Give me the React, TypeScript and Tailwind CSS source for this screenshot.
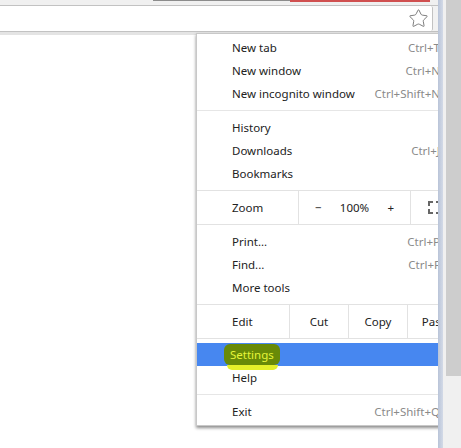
import { Star } from "lucide-react";

interface Item {
    label: string;
    shortcut?: string;
}

function MenuItem({ label, shortcut }: Item) {
    return (
        <div className="flex h-[23px] items-center justify-between pl-[35px] pr-[25px]">
            <span>{label}</span>
            {shortcut && <span className="text-[#8a8a8a]">{shortcut}</span>}
        </div>
    );
}

function Separator() {
    return <div className="my-[5px] h-px bg-[#e6e6e6]" />;
}

function FullscreenIcon() {
    return (
        <svg width="13" height="13" viewBox="0 0 13 13" fill="none" stroke="#666" strokeWidth="2">
            <path d="M1 5V1h4M8 1h4v4M12 8v4H8M5 12H1V8" />
        </svg>
    );
}

export default function App() {
    return (
        <div className="flex h-[448px] w-[461px] overflow-hidden bg-white font-['Noto_Sans',sans-serif] text-[11.5px] text-[#222]">
            <div className="relative flex flex-1 flex-col overflow-hidden">
                {/* tab strip bottom */}
                <div className="flex h-[5px] bg-[#f0f0f0]">
                    <div className="w-[153px]" />
                    <div className="w-[137px] border-t border-[#8c8c8c]" />
                    <div className="w-[140px] border-t-2 border-[#d05050]" />
                </div>

                {/* toolbar */}
                <div className="flex h-[27px] border-y border-[#c2c2c2]">
                    <div className="flex flex-1 items-center justify-end rounded-r-[2px] border-r border-[#c2c2c2] bg-white pr-[3px]">
                        <Star size={21} strokeWidth={1} color="#6b6b6b" />
                    </div>
                    <div className="w-[5px] bg-[#f2f2f2]" />
                </div>
                <div className="h-[3px] bg-[#e4e4e4]" />
                <div className="flex-1 bg-white" />

                {/* chrome menu */}
                <div className="absolute left-[196px] top-[33px] w-[270px] border border-[#c8c8c8] bg-white pb-[2px] pt-[2px] shadow-[0_2px_3px_rgba(0,0,0,0.45)]">
                    <MenuItem label="New tab" shortcut="Ctrl+T" />
                    <MenuItem label="New window" shortcut="Ctrl+N" />
                    <MenuItem label="New incognito window" shortcut="Ctrl+Shift+N" />
                    <Separator />
                    <MenuItem label="History" />
                    <MenuItem label="Downloads" shortcut="Ctrl+J" />
                    <MenuItem label="Bookmarks" />

                    <div className="mt-[5px] flex h-[35px] border-y border-[#e2e2e2]">
                        <div className="flex w-[101px] items-center pl-[35px]">Zoom</div>
                        <div className="flex w-[112px] items-center justify-between border-l border-[#e2e2e2] px-[16px]">
                            <span>−</span>
                            <span>100%</span>
                            <span>+</span>
                        </div>
                        <div className="flex flex-1 items-center border-l border-[#e2e2e2] pl-[17px]">
                            <FullscreenIcon />
                        </div>
                    </div>

                    <div className="mt-[5px]">
                        <MenuItem label="Print..." shortcut="Ctrl+P" />
                        <MenuItem label="Find..." shortcut="Ctrl+F" />
                        <MenuItem label="More tools" />
                    </div>

                    <div className="mt-[5px] flex h-[35px] border-y border-[#e2e2e2]">
                        <div className="flex w-[92px] items-center pl-[35px]">Edit</div>
                        <div className="flex w-[59px] items-center justify-center border-l border-[#e2e2e2]">Cut</div>
                        <div className="flex w-[59px] items-center justify-center border-l border-[#e2e2e2]">Copy</div>
                        <div className="flex flex-1 items-center justify-center border-l border-[#e2e2e2]">Paste</div>
                    </div>

                    <div className="mt-[4px] flex h-[23px] items-center bg-[#4787f0] pl-[27px]">
                        <span className="relative rounded-[6px] bg-[#688a08] px-[6px] py-[2px] text-[#e6f43a]">
                            Settings
                            <span className="absolute -bottom-[5px] left-[3px] right-[2px] h-[5px] rounded-b-[5px] bg-[#e4f02a]" />
                        </span>
                    </div>
                    <MenuItem label="Help" />
                    <Separator />
                    <MenuItem label="Exit" shortcut="Ctrl+Shift+Q" />
                </div>
            </div>

            {/* window edge + scrollbar */}
            <div className="flex w-[23px]">
                <div className="w-[5px] bg-gradient-to-r from-[#b9c4d8] to-[#d3dae7]" />
                <div className="flex flex-1 flex-col bg-[#f0f0f0]">
                    <div className="ml-[3px] h-[376px] bg-[#cdcdcd]" />
                </div>
            </div>
        </div>
    );
}
